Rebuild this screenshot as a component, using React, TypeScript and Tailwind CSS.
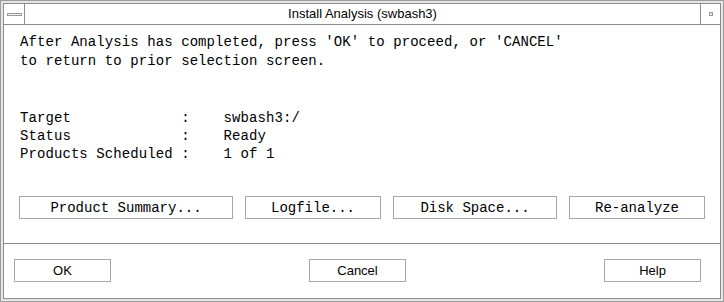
const mono = { fontFamily: '"Liberation Mono", "DejaVu Sans Mono", monospace' };

function MonoButton({ label, width }: { label: string; width: string }) {
  return (
    <button
      className={`${width} h-[23px] border border-[#a8a8a8] bg-white text-[14px] leading-none text-black`}
      style={mono}
    >
      {label}
    </button>
  );
}

function SansButton({ label }: { label: string }) {
  return (
    <button className="w-[97px] h-[23px] border border-[#a8a8a8] bg-white text-[13px] leading-none text-black font-['Liberation_Sans',Arial,sans-serif]">
      {label}
    </button>
  );
}

export default function App() {
  return (
    <div className="w-[724px] h-[302px] border border-[#9c9c9c] bg-[#e6e6e6] p-[2px]">
      <div className="h-full border border-[#8c8c8c] bg-white flex flex-col">
        {/* title bar */}
        <div className="flex h-[21px] border-b border-[#8c8c8c]">
          <div className="w-[21px] border-r border-[#8c8c8c] flex items-center justify-center">
            <div className="w-[15px] h-[3px] border border-[#9a9a9a] bg-[#f4f4f4]" />
          </div>
          <div className="flex-1 flex items-center justify-center text-[13px] text-black font-['Liberation_Sans',Arial,sans-serif]">
            Install Analysis (swbash3)
          </div>
          <div className="w-[20px] border-l border-[#8c8c8c] flex items-center justify-center">
            <div className="w-[4px] h-[4px] border border-[#9a9a9a] bg-[#e8e8e8]" />
          </div>
        </div>

        {/* message */}
        <div
          className="pl-[16px] pt-[8px] text-[14px] leading-[19px] text-black whitespace-pre tracking-[0.08px]"
          style={mono}
        >
          <div>After Analysis has completed, press 'OK' to proceed, or 'CANCEL'</div>
          <div>to return to prior selection screen.</div>
        </div>

        <div
          className="pl-[16px] mt-[38px] text-[14px] leading-[18px] text-black whitespace-pre tracking-[0.08px]"
          style={mono}
        >
          <div>Target             :    swbash3:/</div>
          <div>Status             :    Ready</div>
          <div>Products Scheduled :    1 of 1</div>
        </div>

        <div className="flex gap-[12px] pl-[15px] mt-[33px]">
          <MonoButton label="Product Summary..." width="w-[214px]" />
          <MonoButton label="Logfile..." width="w-[136px]" />
          <MonoButton label="Disk Space..." width="w-[164px]" />
          <MonoButton label="Re-analyze" width="w-[136px]" />
        </div>

        <div className="mt-[24px] border-t border-[#8c8c8c]" />

        <div className="flex justify-between pl-[10px] pr-[19px] mt-[15px]">
          <SansButton label="OK" />
          <SansButton label="Cancel" />
          <SansButton label="Help" />
        </div>
      </div>
    </div>
  );
}
